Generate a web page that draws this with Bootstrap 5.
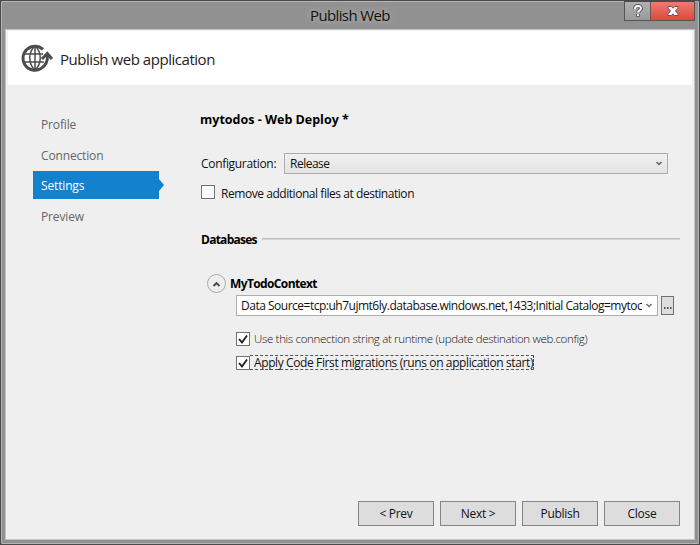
<!DOCTYPE html>
<html lang="en">
<head>
<meta charset="utf-8">
<title>Publish Web</title>
<meta name="viewport" content="width=device-width, initial-scale=1">
<link href="https://cdn.jsdelivr.net/npm/bootstrap@5.3.0/dist/css/bootstrap.min.css" rel="stylesheet">
<style>
body{width:700px;height:545px;overflow:hidden;background:#4a4a4a;font:12px/16px "Open Sans","Noto Sans",sans-serif;color:#111}
.win{margin:1px 0 0 1px;width:698px;height:543px;border:1px solid #b4b4b4;border-radius:1px;background:#919191;padding:0 3px 3px}
.titlebar{height:27px}
.title-text{font-size:15px;line-height:26px;letter-spacing:-.62px;margin-left:305px;text-shadow:0 0 8px #b5b5b5,0 0 5px #aaa}
.caption-btns{height:20px;margin-top:-1px;border:1px solid #555;border-top-color:#4a4a4a}
.cap-help{width:26px;background:linear-gradient(#b0b0b0,#9a9a9a);border-right:1px solid #6c5555}
.cap-close{width:43px;background:linear-gradient(#f07a70,#da4a3c)}
.client{height:511px;border:1px solid #c4c4c4;background:#efefef}
.banner{height:55px;background:#fff;border:solid #f2f2f2;border-width:1px 2px 0;padding-left:13px}
.banner-text{font-size:15px;letter-spacing:-.46px;color:#222;margin-left:6px;padding-top:1px}
.steps{width:126px;margin:23px 0 0 27px}
.steps .nav-link{height:30.5px;padding:0 0 0 8px;line-height:33px;color:#666;letter-spacing:-.15px}
.steps .nav-link.active{background:#1382ce;color:#fff;height:28px;margin:2px 0 .5px;line-height:29px;position:relative}
.steps .nav-link.active::after{content:"";position:absolute;left:100%;top:8px;border:6px solid transparent;border-left:5px solid #1382ce;border-right:0}
.pane{margin-left:41px;width:480px}
.heading{margin-top:25px;font-weight:700;height:20px;line-height:20px;font-size:12.5px;color:#000}
.conf{margin-top:23px;height:21px}
.conf-label{width:84px;padding-left:1px;letter-spacing:-.32px}
.drop{width:384px;height:21px;border:1px solid #acacac;background:linear-gradient(#f0f0f0,#e4e4e4);padding:0 4px 0 5px;letter-spacing:-.5px}
.box{width:14px;height:14px;border:1px solid #707070;background:#fff;flex:none}
.box svg,.chev{display:block;flex:none}
.remove-row{height:16px;margin-top:10px;padding-left:1px;letter-spacing:-.45px}
.remove-row .label-text{margin-left:6px;padding-top:4px}
.section{height:16px;margin-top:32px;letter-spacing:-.74px;color:#000}
.section b{padding-left:1px}
.rule{height:2px;background:#bcbcbc;border-bottom:1px solid #d4d4d4;margin:0 0 2px 5px}
.ctx{height:19px;margin-top:26px;padding-left:7px;letter-spacing:-.62px;color:#000}
.exp{width:19px;height:19px;border:1px solid #aaa;border-radius:50%}
.sub{margin:2px 0 0 36px}
.combo{width:422px;height:21px;border:1px solid #abadb3;background:#fff;padding:0 4px}
.clip{width:401px;height:19px;line-height:20px;overflow:hidden;letter-spacing:-.495px}
.more{width:13px;height:19px;margin-left:3px;border:1px solid #707070;background:#ddd}
.runtime{height:14px;margin-top:16px}
.runtime .label-text{margin-left:4px;font-size:11.5px;font-weight:300;letter-spacing:-.33px;color:#111}
.migrate{height:15px;margin-top:9px}
.focusrect{border:1px dashed #555;border-left:0;height:15px;line-height:13px;padding-left:4px;letter-spacing:-.39px;width:284px}
.actions{gap:6px;padding:0 14px 13px 0;margin-top:auto}
.actions .btn{width:76px;height:25px;padding:0;border:1px solid #858585;border-radius:0;background:#ddd;color:#111;font-size:12px;line-height:23px;letter-spacing:-.3px}
</style>
</head>
<body>
<div class="win">
  <header class="titlebar d-flex">
    <div class="title-text text-nowrap">Publish Web</div>
    <div class="caption-btns d-flex ms-auto">
      <div class="cap-help d-flex align-items-center justify-content-center"><svg width="12" height="14" viewBox="0 0 12 14"><path d="M3 5C3 1 9 1 9 4.500C9 6.500 6 6.500 6 8.500M6 10v2.800" fill="none" stroke="#54545f" stroke-width="3.800"/><path d="M3 5C3 1 9 1 9 4.500C9 6.500 6 6.500 6 8.500M6 10.300v1.700" fill="none" stroke="#fff" stroke-width="2"/></svg></div>
      <div class="cap-close d-flex align-items-center justify-content-center"><svg width="12" height="10" viewBox="0 0 12 10"><path d="M1 .5h3.500L6 2.200 7.500.5H11v1.700L8.500 5 11 7.800v1.700H7.500L6 7.800 4.500 9.500H1V7.800L3.500 5 1 2.200z" fill="#fff" stroke="#65505c" stroke-width="1"/></svg></div>
    </div>
  </header>
  <div class="client d-flex flex-column">
    <div class="banner d-flex align-items-center">
      <svg width="33" height="30" viewBox="0 0 33 30" fill="none" stroke="#4c4c4c"><path d="M22 6.300A12 12 0 1 0 20 25.600Q27 21.500 26.500 12" stroke-width="2.900"/><path d="M14 3v24M3 11h19M3 19h20M14 3C7 9 7 21 14 27M14 3C21 9 21 21 14 27" stroke-width="1.500"/><path d="M21 16L26.300 10.500L31 16" stroke-width="2.900"/></svg>
      <span class="banner-text text-nowrap">Publish web application</span>
    </div>
    <div class="d-flex">
      <nav class="steps nav flex-column">
        <a class="nav-link">Profile</a>
        <a class="nav-link">Connection</a>
        <a class="nav-link active">Settings</a>
        <a class="nav-link">Preview</a>
      </nav>
      <main class="pane text-nowrap">
        <div class="heading">mytodos - Web Deploy *</div>
        <div class="conf d-flex align-items-center">
          <span class="conf-label">Configuration:</span>
          <div class="drop d-flex align-items-center justify-content-between"><span>Release</span><svg class="chev" width="8" height="6" viewBox="0 0 8 6"><path d="M1.500 1L4 3.500 6.500 1" fill="none" stroke="#606060" stroke-width="1.500"/></svg></div>
        </div>
        <div class="remove-row d-flex align-items-center"><span class="box"></span><span class="label-text">Remove additional files at destination</span></div>
        <div class="section d-flex align-items-center"><b>Databases</b><div class="rule flex-grow-1"></div></div>
        <div class="ctx d-flex align-items-center">
          <span class="exp d-flex align-items-center justify-content-center"><svg width="9" height="6" viewBox="0 0 9 6"><path d="M1.500 5l3-3 3 3" fill="none" stroke="#444" stroke-width="1.800"/></svg></span>
          <b class="ms-1">MyTodoContext</b>
        </div>
        <div class="sub">
          <div class="d-flex align-items-center">
            <div class="combo d-flex align-items-center justify-content-between"><div class="clip">Data Source=tcp:uh7ujmt6ly.database.windows.net,1433;Initial Catalog=mytoc</div><svg class="chev" width="8" height="6" viewBox="0 0 8 6"><path d="M1.500 1L4 3.500 6.500 1" fill="none" stroke="#707070" stroke-width="1.500"/></svg></div>
            <div class="more d-flex align-items-center justify-content-center"><svg width="9" height="8" viewBox="0 0 9 8"><path d="M1 6h1.500M4 6h1.500M7 6h1.500" stroke="#222" stroke-width="1.500"/></svg></div>
          </div>
          <div class="runtime d-flex align-items-center"><span class="box"><svg width="12" height="12" viewBox="0 0 12 12"><path d="M2 6l3 3.500L10 2.500" fill="none" stroke="#222" stroke-width="1.900"/></svg></span><span class="label-text">Use this connection string at runtime (update destination web.config)</span></div>
          <div class="migrate d-flex align-items-center"><span class="box"><svg width="12" height="12" viewBox="0 0 12 12"><path d="M2 6l3 3.500L10 2.500" fill="none" stroke="#222" stroke-width="1.900"/></svg></span><span class="focusrect">Apply Code First migrations (runs on application start)</span></div>
        </div>
      </main>
    </div>
    <div class="actions d-flex justify-content-end">
      <button class="btn">&lt; Prev</button><button class="btn">Next &gt;</button><button class="btn">Publish</button><button class="btn">Close</button>
    </div>
  </div>
</div>
<script src="https://cdn.jsdelivr.net/npm/bootstrap@5.3.0/dist/js/bootstrap.bundle.min.js"></script>
</body>
</html>
